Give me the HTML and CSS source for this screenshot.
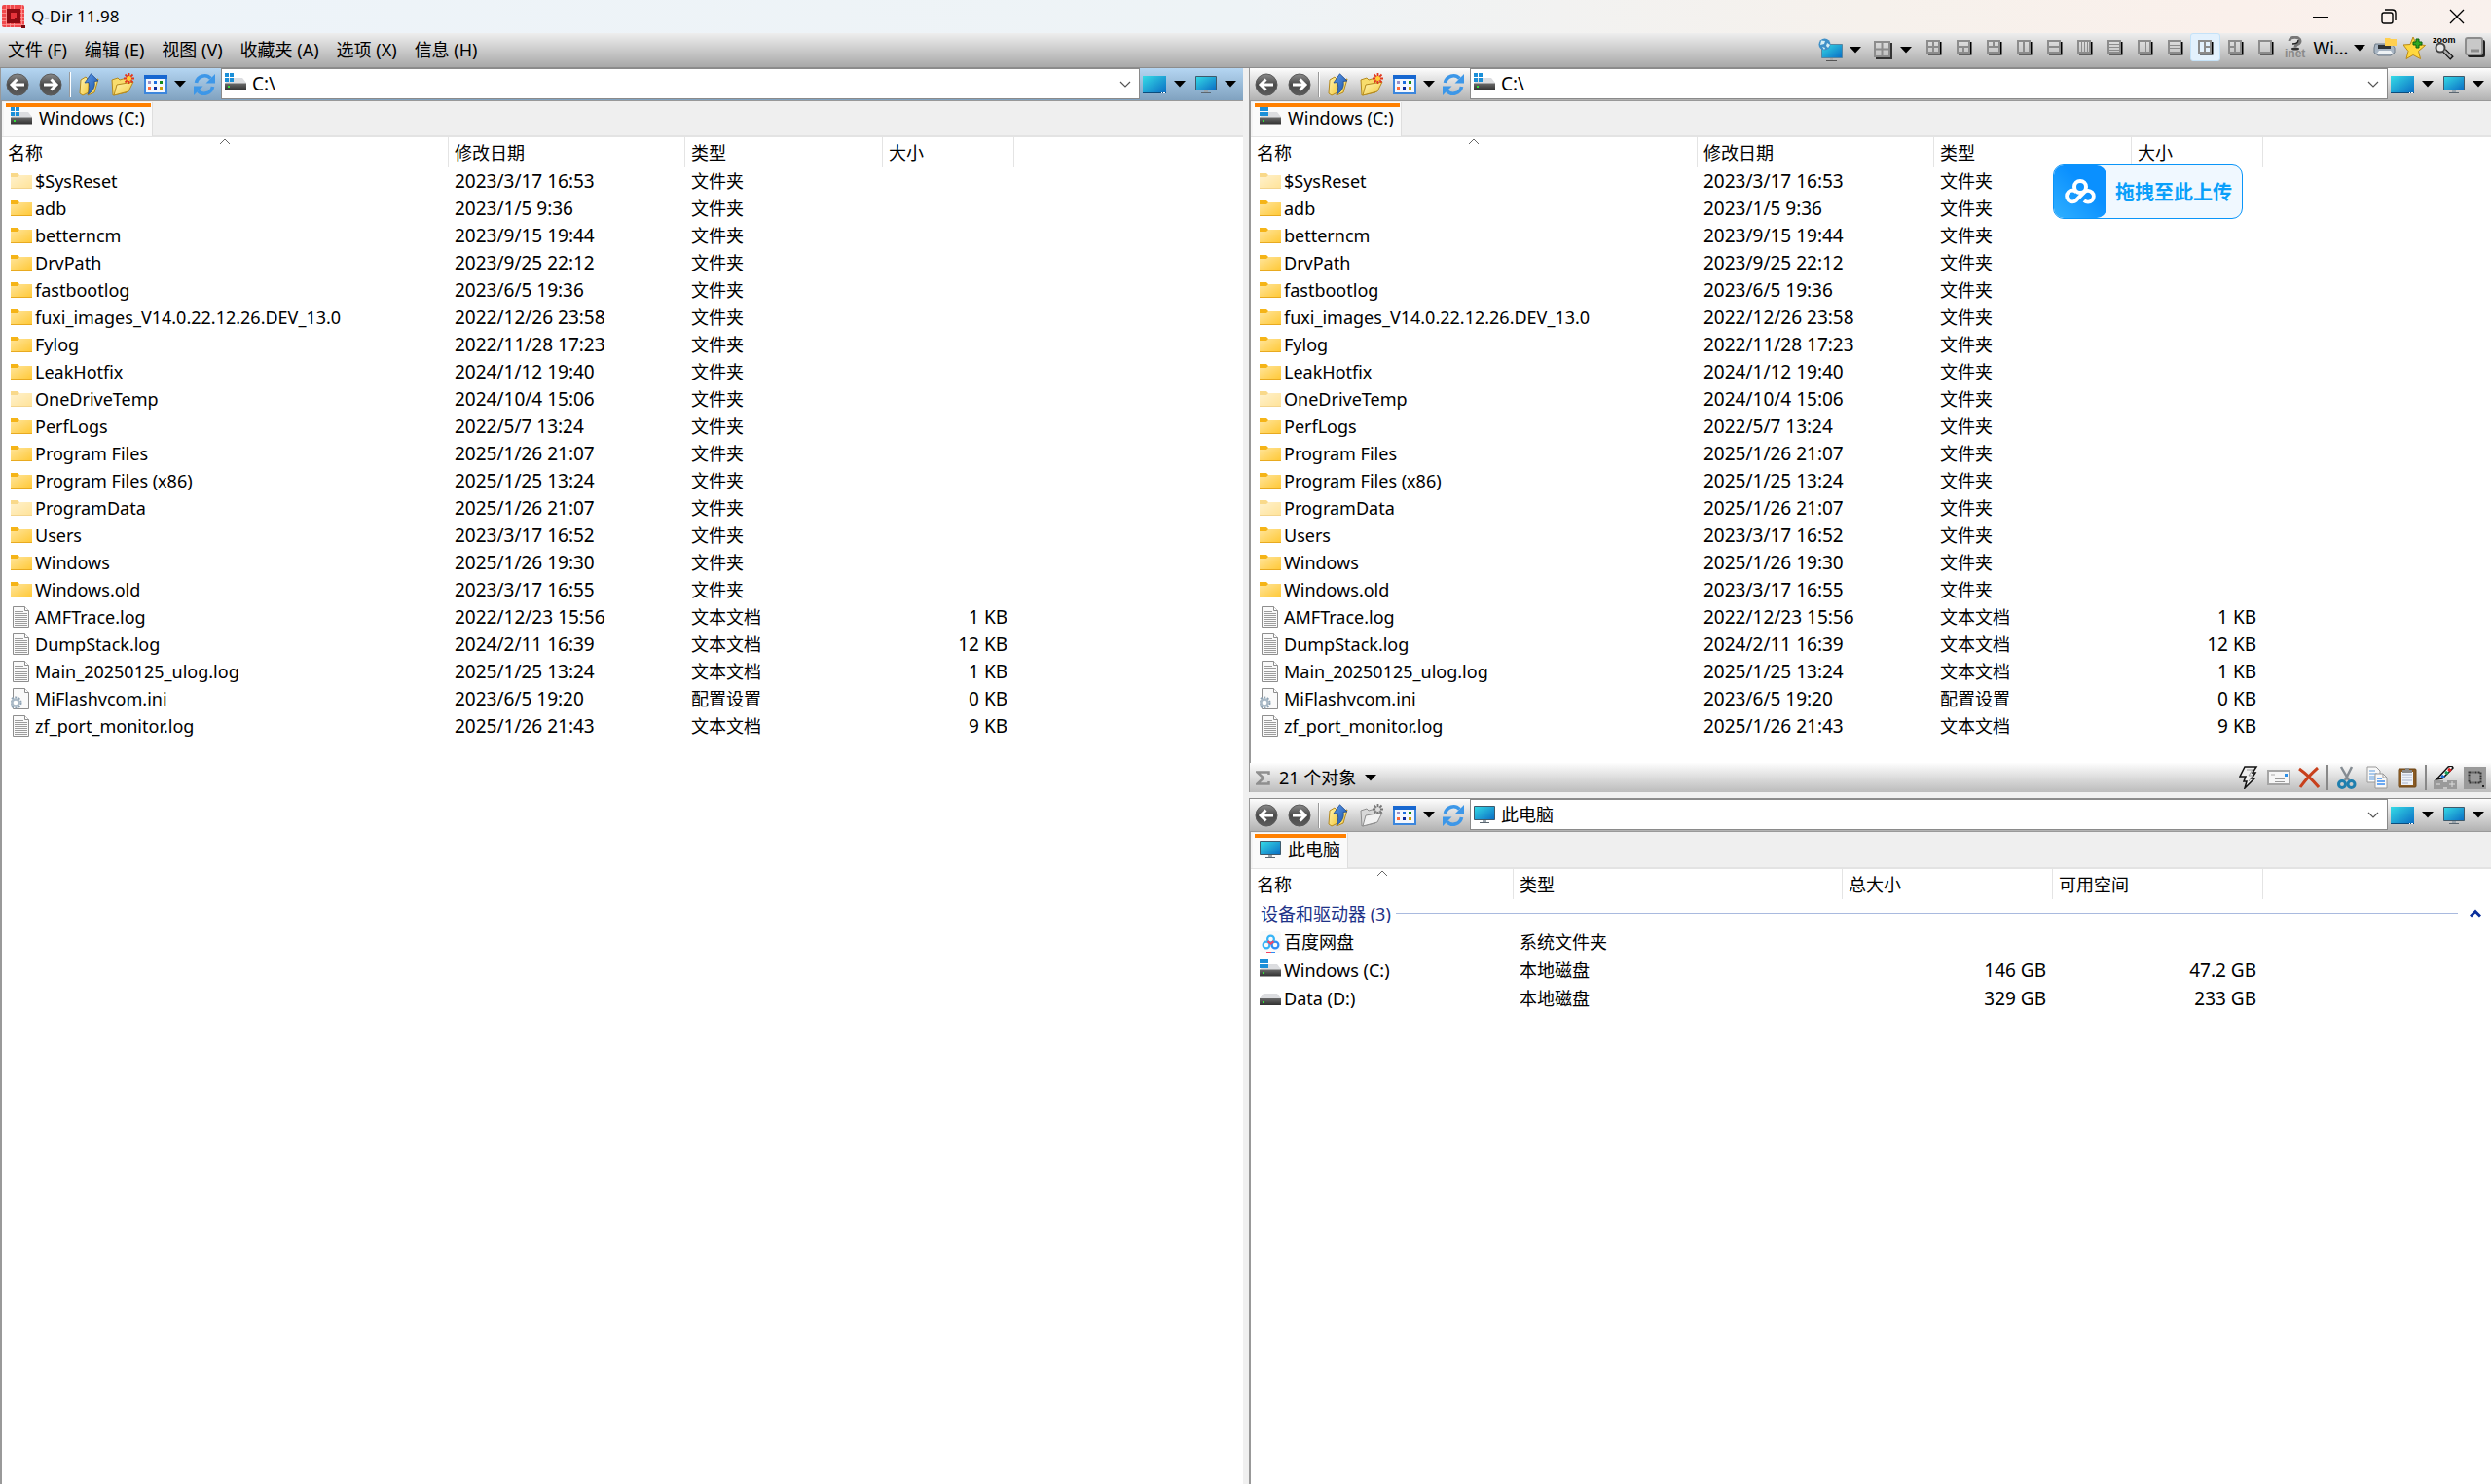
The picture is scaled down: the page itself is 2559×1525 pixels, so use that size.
FILE: index.html
```html
<!DOCTYPE html>
<html lang="zh-CN">
<head>
<meta charset="utf-8">
<title>Q-Dir 11.98</title>
<link rel="stylesheet" href="styles.css">
</head>
<body>
<svg class="sprite" aria-hidden="true">
  <defs>
    <linearGradient id="gScreen" x1="0" y1="0" x2="1" y2="1"><stop offset="0" stop-color="#35dbe6"/><stop offset="1" stop-color="#0a6cc4"/></linearGradient>
    <linearGradient id="gFolder" x1="0" y1="0" x2="1" y2="1"><stop offset="0" stop-color="#ffe59c"/><stop offset="1" stop-color="#ffc938"/></linearGradient>
    <linearGradient id="gBall" x1="0" y1="0" x2="0" y2="1"><stop offset="0" stop-color="#8a8a8a"/><stop offset=".5" stop-color="#4a4a4a"/><stop offset="1" stop-color="#5c5c5c"/></linearGradient>
    <linearGradient id="gYellow" x1="0" y1="0" x2="1" y2="1"><stop offset="0" stop-color="#fff6b8"/><stop offset="1" stop-color="#f3c83a"/></linearGradient>
    <linearGradient id="gArrow" x1="0" y1="0" x2="1" y2="1"><stop offset="0" stop-color="#5b9bef"/><stop offset="1" stop-color="#1a4f9f"/></linearGradient>
    <linearGradient id="gDrive" x1="0" y1="0" x2="0" y2="1"><stop offset="0" stop-color="#6a6a6a"/><stop offset="1" stop-color="#303030"/></linearGradient>
  </defs>
  <symbol id="folder" viewBox="0 0 22 22"><path d="M0 3h7l2 2h13v14H0z" fill="#f5b417"/><path d="M0 7h7l2-2h13v13H0z" fill="url(#gFolder)"/><path d="M0 18h22v1H0z" fill="#e8aa20"/></symbol>
  <symbol id="log" viewBox="0 0 22 22"><path d="M2.5.5h12l4 4v17h-16z" fill="#fafafa" stroke="#8e8e8e"/><path d="M14.500.5v4h4" fill="#fff" stroke="#8e8e8e"/><path d="M4 5.500h9M4 7.500h13M4 9.500h13M4 11.500h13M4 13.500h13M4 15.500h13M4 17.500h13M4 19.500h13" stroke="#9c9c9c"/></symbol>
  <symbol id="ini" viewBox="0 0 22 22"><path d="M2.500.5h12l4 4v17h-16z" fill="#fafafa" stroke="#8e8e8e"/><path d="M14.500.5v4h4" fill="#fff" stroke="#8e8e8e"/><circle cx="5" cy="15" r="5.500" fill="none" stroke="#8fa3b4" stroke-width="2" stroke-dasharray="2 1.500"/><circle cx="5" cy="15" r="3.600" fill="#fff" stroke="#a9b9c6" stroke-width="2.500"/></symbol>
  <symbol id="drive" viewBox="0 0 22 22"><path d="M4 6h14l4 5H0z" fill="#dcdde0"/><path d="M0 11h22v7H0z" fill="url(#gDrive)"/><path d="M3 14h2v2H3z" fill="#33e03a"/></symbol>
  <symbol id="windrive" viewBox="0 0 22 22"><path d="M4 5h14l4 5v1H0z" fill="#dcdde0"/><path d="M0 10.500h22v7H0z" fill="url(#gDrive)"/><path d="M3 13h2v2H3z" fill="#33e03a"/><path d="M0 0h4v4H0zM5 0h4v4H5zM0 5h4v4H0zM5 5h4v4H5z" fill="#1b8fd8"/></symbol>
  <symbol id="pc" viewBox="0 0 22 22"><path d="M.5 2.500h21v14H.5z" fill="url(#gScreen)" stroke="#3f5a6c"/><path d="M9 17h4v2H9z" fill="#9aa5ad"/><path d="M6 19h10v1H6z" fill="#5a6670"/></symbol>
  <symbol id="desk" viewBox="0 0 24 22"><path d="M0 2h24v18H0z" fill="url(#gScreen)"/><path d="M0 19h24v1H0z" fill="#0b4c7c"/><path d="M19 19h1v1h-1zM21 19h2v1h-2z" fill="#fff"/></symbol>
  <symbol id="back" viewBox="0 0 24 24"><circle cx="12" cy="12" r="11" fill="url(#gBall)" stroke="#5a5a5a"/><path d="M11.500 6.500L6 12l5.500 5.500M6 12h13" fill="none" stroke="#fff" stroke-width="3"/></symbol>
  <symbol id="fwd" viewBox="0 0 24 24"><circle cx="12" cy="12" r="11" fill="url(#gBall)" stroke="#5a5a5a"/><path d="M12.500 6.500L18 12l-5.500 5.500M18 12H5" fill="none" stroke="#fff" stroke-width="3"/></symbol>
  <symbol id="up" viewBox="0 0 24 24"><path d="M3 7l5-3 3 3v13l-6 3-3-2z" fill="url(#gYellow)" stroke="#b58a1e"/><path d="M12 9l9-3-4 14-7 3z" fill="url(#gYellow)" stroke="#b58a1e"/><path d="M13.500.8L21 8l-4 .5c1 5-1 10-6.500 13.500C12 17 12 12 11 9.500L7 10z" fill="url(#gArrow)" stroke="#1c4a90" stroke-width=".8"/></symbol>
  <symbol id="newf" viewBox="0 0 24 24"><path d="M1 7l6-2 2 2 7-2 2 3-2 12-14 3z" fill="#f8dd6c" stroke="#b58a1e"/><path d="M6 12l17-3-5 10-15 4z" fill="url(#gYellow)" stroke="#b58a1e"/><path d="M18.500 0v11M13 5.500h11M14.500 1.500l8 8M22.500 1.500l-8 8" stroke="#e2381d" stroke-width="1.800"/><circle cx="18.500" cy="5.500" r="2.500" fill="#ffce3a"/></symbol>
  <symbol id="newg" viewBox="0 0 24 24"><path d="M1 7l6-2 2 2 7-2 2 3-2 12-14 3z" fill="#d8d8d8" stroke="#8e8e8e"/><path d="M6 12l17-3-5 10-15 4z" fill="#f1f1f1" stroke="#8e8e8e"/><path d="M18.500 0v11M13 5.500h11M14.500 1.500l8 8M22.500 1.500l-8 8" stroke="#777" stroke-width="1.800"/><circle cx="18.500" cy="5.500" r="2.500" fill="#ddd"/></symbol>
  <symbol id="view" viewBox="0 0 24 24"><path d="M1 3h22v18H1z" fill="#f4f8ff" stroke="#3b86dd" stroke-width="2"/><path d="M0 2h24v4H0z" fill="#1767d0"/><path d="M4 8h3v3H4z" fill="#9a90c8"/><path d="M10 8h3v3h-3z" fill="#1d6fe0"/><path d="M16 8h3v3h-3z" fill="#138a1c"/><path d="M4 14h3v3H4z" fill="#ff6a3c"/><path d="M10 14h3v3h-3z" fill="#0c2b9c"/><path d="M16 14h3v3h-3z" fill="#caa012"/></symbol>
  <symbol id="refresh" viewBox="0 0 24 24"><path d="M3.500 10A8.800 8.800 0 0 1 18.500 5.500M20.500 14A8.800 8.800 0 0 1 5.500 18.500" fill="none" stroke="#3d97e8" stroke-width="3.600"/><path d="M23 1v9.500h-9.500zM1 23v-9.500h9.500z" fill="#3d97e8"/></symbol>
  <symbol id="caret" viewBox="0 0 12 7"><path d="M0 0h12L6 6.500z"/></symbol>
  <symbol id="chev" viewBox="0 0 12 7"><path d="M1 1l5 5 5-5" fill="none" stroke="#555" stroke-width="1.200"/></symbol>
  <symbol id="sort" viewBox="0 0 12 7"><path d="M1 6l5-5 5 5" fill="none" stroke="#666"/></symbol>
  <symbol id="frame" viewBox="0 0 16 16"><path d="M14 2h1.500v13.500H2V14h12z" fill="#000"/><path d="M1 1h12v12H1z" fill="none" stroke="#8c8c8c" stroke-width="2"/></symbol>
  <symbol id="baidu" viewBox="0 0 22 22"><rect width="22" height="22" rx="3" fill="#fafafa"/><circle cx="7" cy="14" r="3.400" fill="none" stroke="#37b4f6" stroke-width="2.200"/><circle cx="16" cy="14" r="3.400" fill="none" stroke="#2e8df5" stroke-width="2.200"/><circle cx="11.500" cy="8" r="3.400" fill="none" stroke="#37b4f6" stroke-width="2.200"/><path d="M8.500 10.200l3 2.300 3-2.300" fill="none" stroke="#f0486a" stroke-width="2.200"/><path d="M7 21h5v1H7z" fill="#f04060"/><path d="M12 21h4v1h-4z" fill="#2e8df5"/></symbol>
</svg>

<header class="titlebar">
  <svg class="appicon" viewBox="0 0 24 24"><rect width="23" height="23" rx="2" fill="#f0484c"/><path d="M0 4.500h23M0 8.500h23M0 12.500h23M0 16.500h23M0 20.500h23M4.500 0v23M8.500 0v23M12.500 0v23M16.500 0v23M20.500 0v23" stroke="#ff9a98" stroke-width=".8"/><path d="M5 4h14v15H5z" fill="#8d0b12"/><path d="M9 8h6v5h-2v2H9z" fill="#e5343b"/><path d="M20 21h4v3h-4z" fill="#7a0a10"/></svg>
  <h1 class="title">Q-Dir 11.98</h1>
  <button class="winbtn" aria-label="最小化"><svg width="16" height="16" viewBox="0 0 16 16"><path d="M0 8.500h16" stroke="#000"/></svg></button>
  <button class="winbtn" aria-label="还原"><svg width="16" height="16" viewBox="0 0 16 16" fill="none" stroke="#000" stroke-width="1.400"><rect x="1" y="4" width="11" height="11" rx="2"/><path d="M4 1h7.500Q15 1 15 4.500V12"/></svg></button>
  <button class="winbtn" aria-label="关闭"><svg width="16" height="16" viewBox="0 0 16 16"><path d="M1 1l14 14M15 1L1 15" stroke="#000" stroke-width="1.300"/></svg></button>
</header>

<nav class="menubar">
  <button class="menu">文件 (F)</button>
  <button class="menu">编辑 (E)</button>
  <button class="menu">视图 (V)</button>
  <button class="menu">收藏夹 (A)</button>
  <button class="menu">选项 (X)</button>
  <button class="menu">信息 (H)</button>
  <div class="tools">
    <button class="drop" aria-label="网络"><svg width="25" height="25" viewBox="0 0 25 25"><path d="M3.500 6.500h21v14h-21z" fill="url(#gScreen)" stroke="#5a86a0"/><path d="M12 21h3v2h-3z" fill="#aaa"/><path d="M8 23.500h11" stroke="#555"/><circle cx="6.500" cy="6.500" r="6" fill="#3f90c8"/><path d="M3 2.500l4 .5-1 3-4 1zM9 5l3 2-2 3-2-2zM4 9l3 1-1 2z" fill="#d6eef4"/></svg><svg class="caret"><use href="#caret"/></svg></button>
    <button class="drop" aria-label="布局"><svg width="20" height="20" viewBox="0 0 20 20"><path d="M17 2h2v17H2v-2h15z" fill="#333"/><path d="M1 1h15v15H1z" fill="none" stroke="#8c8c8c" stroke-width="2"/><path d="M8.500 2v14M2 8.500h14" stroke="#8c8c8c" stroke-width="2"/></svg><svg class="caret"><use href="#caret"/></svg></button>
    <button class="lay" aria-label="四窗格"><svg width="16" height="16"><use href="#frame"/><path d="M7 1v12M1 7h12"/></svg></button>
    <button class="lay" aria-label="上一下二"><svg width="16" height="16"><use href="#frame"/><path d="M7 7v6M1 7h12"/></svg></button>
    <button class="lay" aria-label="上二下一"><svg width="16" height="16"><use href="#frame"/><path d="M7 1v6M1 7h12"/></svg></button>
    <button class="lay" aria-label="两列"><svg width="16" height="16"><use href="#frame"/><path d="M7 1v12"/></svg></button>
    <button class="lay" aria-label="两行"><svg width="16" height="16"><use href="#frame"/><path d="M1 7h12"/></svg></button>
    <button class="lay thin" aria-label="四列"><svg width="16" height="16"><use href="#frame"/><path d="M4.500 1v12M7.500 1v12M10.500 1v12"/></svg></button>
    <button class="lay thin" aria-label="四行"><svg width="16" height="16"><use href="#frame"/><path d="M1 4.500h12M1 7.500h12M1 10.500h12"/></svg></button>
    <button class="lay thin" aria-label="三列"><svg width="16" height="16"><use href="#frame"/><path d="M5.500 1v12M8.500 1v12"/></svg></button>
    <button class="lay thin" aria-label="三行"><svg width="16" height="16"><use href="#frame"/><path d="M1 5.500h12M1 8.500h12"/></svg></button>
    <button class="lay active" aria-label="左一右二" aria-pressed="true"><svg width="16" height="16"><use href="#frame"/><path d="M7 1v12M7 7h6"/></svg></button>
    <button class="lay" aria-label="左二右一"><svg width="16" height="16"><use href="#frame"/><path d="M7 1v12M1 7h6"/></svg></button>
    <button class="lay" aria-label="单窗格"><svg width="16" height="16"><use href="#frame"/></svg></button>
    <button class="inet" aria-label="帮助"><svg width="24" height="24" viewBox="0 0 24 24"><path d="M6 5c0-5 11-5 11 0 0 4-5 3-5 6" fill="none" stroke="#777" stroke-width="3"/><path d="M9 8c5 0 6-2 6-4" fill="none" stroke="#222" stroke-width="1.500"/><ellipse cx="12" cy="13" rx="4" ry="1.500" fill="#333"/><text x="1" y="22" class="inet-text">inet</text></svg></button>
    <button class="wi">Wi...<svg class="caret"><use href="#caret"/></svg></button>
    <button class="lay" aria-label="打印"><svg width="24" height="24" viewBox="0 0 24 24"><path d="M2 8h17l3 4v5l-4 3H5l-4-3v-5z" fill="#a9b6c4" stroke="#6e7c8a"/><path d="M5 9h13v4H5z" fill="#2e3338"/><path d="M6 15h12l2 3H4z" fill="#eef2f5"/><path d="M12 2h5l1 1h6v7H12z" fill="#ffcf4f"/></svg></button>
    <button class="lay" aria-label="收藏"><svg width="24" height="24" viewBox="0 0 24 24"><path d="M10 1l3.500 7.500 9 1-7 6 2 8-7.500-4-7 4 2-8L0 9l7-.5z" fill="#ffd83e" stroke="#b98a1a"/><path d="M13 3h3v3h3v3h-3v3h-3V9h-3V6h3z" fill="#2fa821" stroke="#0d6010"/></svg></button>
    <button class="lay" aria-label="缩放"><svg width="25" height="26" viewBox="0 0 25 26"><text x="0" y="8" class="zoom-text">zoom</text><circle cx="8" cy="13" r="4.500" fill="#e6e6e6" stroke="#444" stroke-width="2"/><path d="M12 16l8 8" stroke="#111" stroke-width="5"/><path d="M12 16l7 7" stroke="#aaa" stroke-width="2.500"/></svg></button>
    <button class="lay" aria-label="托盘"><svg width="21" height="21" viewBox="0 0 21 21"><rect x="3" y="3" width="18" height="18" rx="2" fill="#222"/><rect x="1" y="1" width="17" height="17" rx="2" fill="#c8c8c8" stroke="#8c8c8c" stroke-width="2"/><path d="M6 14h9" stroke="#8c8c8c" stroke-width="3"/></svg></button>
  </div>
</nav>

<main class="workspace">
  <section class="pane focused">
    <div class="toolbar">
      <button class="tb" aria-label="后退"><svg><use href="#back"/></svg></button>
      <button class="tb" aria-label="前进"><svg><use href="#fwd"/></svg></button>
      <i class="sep"></i>
      <button class="tb" aria-label="上级"><svg><use href="#up"/></svg></button>
      <button class="tb" aria-label="新建文件夹"><svg><use href="#newf"/></svg></button>
      <button class="tb" aria-label="查看"><svg><use href="#view"/></svg></button>
      <button class="tc" aria-label="查看方式"><svg class="caret"><use href="#caret"/></svg></button>
      <button class="tb" aria-label="刷新"><svg><use href="#refresh"/></svg></button>
      <div class="combo"><svg class="ico"><use href="#windrive"/></svg><input aria-label="地址" value="C:\"><button class="open" aria-label="展开"><svg class="caret"><use href="#chev"/></svg></button></div>
      <button class="td" aria-label="桌面"><svg width="24" height="22"><use href="#desk"/></svg><svg class="caret"><use href="#caret"/></svg></button>
      <button class="td" aria-label="此电脑"><svg width="22" height="22"><use href="#pc"/></svg><svg class="caret"><use href="#caret"/></svg></button>
    </div>
    <div class="view">
      <div class="tabs"><button class="tab"><svg class="ico"><use href="#windrive"/></svg>Windows (C:)</button></div>
      <table class="files">
        <colgroup><col class="c-name"><col class="c-date"><col class="c-type"><col class="c-size"><col></colgroup>
        <thead><tr><th>名称<svg class="sort"><use href="#sort"/></svg></th><th>修改日期</th><th>类型</th><th>大小</th><td></td></tr></thead>
        <tbody>
          <tr class="pale"><td><svg><use href="#folder"/></svg>$SysReset</td><td>2023/3/17 16:53</td><td>文件夹</td><td></td></tr>
          <tr><td><svg><use href="#folder"/></svg>adb</td><td>2023/1/5 9:36</td><td>文件夹</td><td></td></tr>
          <tr><td><svg><use href="#folder"/></svg>betterncm</td><td>2023/9/15 19:44</td><td>文件夹</td><td></td></tr>
          <tr><td><svg><use href="#folder"/></svg>DrvPath</td><td>2023/9/25 22:12</td><td>文件夹</td><td></td></tr>
          <tr><td><svg><use href="#folder"/></svg>fastbootlog</td><td>2023/6/5 19:36</td><td>文件夹</td><td></td></tr>
          <tr><td><svg><use href="#folder"/></svg>fuxi_images_V14.0.22.12.26.DEV_13.0</td><td>2022/12/26 23:58</td><td>文件夹</td><td></td></tr>
          <tr><td><svg><use href="#folder"/></svg>Fylog</td><td>2022/11/28 17:23</td><td>文件夹</td><td></td></tr>
          <tr><td><svg><use href="#folder"/></svg>LeakHotfix</td><td>2024/1/12 19:40</td><td>文件夹</td><td></td></tr>
          <tr class="pale"><td><svg><use href="#folder"/></svg>OneDriveTemp</td><td>2024/10/4 15:06</td><td>文件夹</td><td></td></tr>
          <tr><td><svg><use href="#folder"/></svg>PerfLogs</td><td>2022/5/7 13:24</td><td>文件夹</td><td></td></tr>
          <tr><td><svg><use href="#folder"/></svg>Program Files</td><td>2025/1/26 21:07</td><td>文件夹</td><td></td></tr>
          <tr><td><svg><use href="#folder"/></svg>Program Files (x86)</td><td>2025/1/25 13:24</td><td>文件夹</td><td></td></tr>
          <tr class="pale"><td><svg><use href="#folder"/></svg>ProgramData</td><td>2025/1/26 21:07</td><td>文件夹</td><td></td></tr>
          <tr><td><svg><use href="#folder"/></svg>Users</td><td>2023/3/17 16:52</td><td>文件夹</td><td></td></tr>
          <tr><td><svg><use href="#folder"/></svg>Windows</td><td>2025/1/26 19:30</td><td>文件夹</td><td></td></tr>
          <tr><td><svg><use href="#folder"/></svg>Windows.old</td><td>2023/3/17 16:55</td><td>文件夹</td><td></td></tr>
          <tr><td><svg><use href="#log"/></svg>AMFTrace.log</td><td>2022/12/23 15:56</td><td>文本文档</td><td>1 KB</td></tr>
          <tr><td><svg><use href="#log"/></svg>DumpStack.log</td><td>2024/2/11 16:39</td><td>文本文档</td><td>12 KB</td></tr>
          <tr><td><svg><use href="#log"/></svg>Main_20250125_ulog.log</td><td>2025/1/25 13:24</td><td>文本文档</td><td>1 KB</td></tr>
          <tr><td><svg><use href="#ini"/></svg>MiFlashvcom.ini</td><td>2023/6/5 19:20</td><td>配置设置</td><td>0 KB</td></tr>
          <tr><td><svg><use href="#log"/></svg>zf_port_monitor.log</td><td>2025/1/26 21:43</td><td>文本文档</td><td>9 KB</td></tr>
        </tbody>
      </table>
    </div>
  </section>

  <div class="stack">
    <section class="pane">
      <div class="toolbar">
        <button class="tb" aria-label="后退"><svg><use href="#back"/></svg></button>
        <button class="tb" aria-label="前进"><svg><use href="#fwd"/></svg></button>
        <i class="sep"></i>
        <button class="tb" aria-label="上级"><svg><use href="#up"/></svg></button>
        <button class="tb" aria-label="新建文件夹"><svg><use href="#newf"/></svg></button>
        <button class="tb" aria-label="查看"><svg><use href="#view"/></svg></button>
        <button class="tc" aria-label="查看方式"><svg class="caret"><use href="#caret"/></svg></button>
        <button class="tb" aria-label="刷新"><svg><use href="#refresh"/></svg></button>
        <div class="combo"><svg class="ico"><use href="#windrive"/></svg><input aria-label="地址" value="C:\"><button class="open" aria-label="展开"><svg class="caret"><use href="#chev"/></svg></button></div>
        <button class="td" aria-label="桌面"><svg width="24" height="22"><use href="#desk"/></svg><svg class="caret"><use href="#caret"/></svg></button>
        <button class="td" aria-label="此电脑"><svg width="22" height="22"><use href="#pc"/></svg><svg class="caret"><use href="#caret"/></svg></button>
      </div>
      <div class="view">
        <div class="tabs"><button class="tab"><svg class="ico"><use href="#windrive"/></svg>Windows (C:)</button></div>
        <table class="files">
          <colgroup><col class="c-name"><col class="c-date"><col class="c-type"><col class="c-size"><col></colgroup>
          <thead><tr><th>名称<svg class="sort"><use href="#sort"/></svg></th><th>修改日期</th><th>类型</th><th>大小</th><td></td></tr></thead>
          <tbody>
            <tr class="pale"><td><svg><use href="#folder"/></svg>$SysReset</td><td>2023/3/17 16:53</td><td>文件夹</td><td></td></tr>
            <tr><td><svg><use href="#folder"/></svg>adb</td><td>2023/1/5 9:36</td><td>文件夹</td><td></td></tr>
            <tr><td><svg><use href="#folder"/></svg>betterncm</td><td>2023/9/15 19:44</td><td>文件夹</td><td></td></tr>
            <tr><td><svg><use href="#folder"/></svg>DrvPath</td><td>2023/9/25 22:12</td><td>文件夹</td><td></td></tr>
            <tr><td><svg><use href="#folder"/></svg>fastbootlog</td><td>2023/6/5 19:36</td><td>文件夹</td><td></td></tr>
            <tr><td><svg><use href="#folder"/></svg>fuxi_images_V14.0.22.12.26.DEV_13.0</td><td>2022/12/26 23:58</td><td>文件夹</td><td></td></tr>
            <tr><td><svg><use href="#folder"/></svg>Fylog</td><td>2022/11/28 17:23</td><td>文件夹</td><td></td></tr>
            <tr><td><svg><use href="#folder"/></svg>LeakHotfix</td><td>2024/1/12 19:40</td><td>文件夹</td><td></td></tr>
            <tr class="pale"><td><svg><use href="#folder"/></svg>OneDriveTemp</td><td>2024/10/4 15:06</td><td>文件夹</td><td></td></tr>
            <tr><td><svg><use href="#folder"/></svg>PerfLogs</td><td>2022/5/7 13:24</td><td>文件夹</td><td></td></tr>
            <tr><td><svg><use href="#folder"/></svg>Program Files</td><td>2025/1/26 21:07</td><td>文件夹</td><td></td></tr>
            <tr><td><svg><use href="#folder"/></svg>Program Files (x86)</td><td>2025/1/25 13:24</td><td>文件夹</td><td></td></tr>
            <tr class="pale"><td><svg><use href="#folder"/></svg>ProgramData</td><td>2025/1/26 21:07</td><td>文件夹</td><td></td></tr>
            <tr><td><svg><use href="#folder"/></svg>Users</td><td>2023/3/17 16:52</td><td>文件夹</td><td></td></tr>
            <tr><td><svg><use href="#folder"/></svg>Windows</td><td>2025/1/26 19:30</td><td>文件夹</td><td></td></tr>
            <tr><td><svg><use href="#folder"/></svg>Windows.old</td><td>2023/3/17 16:55</td><td>文件夹</td><td></td></tr>
            <tr><td><svg><use href="#log"/></svg>AMFTrace.log</td><td>2022/12/23 15:56</td><td>文本文档</td><td>1 KB</td></tr>
            <tr><td><svg><use href="#log"/></svg>DumpStack.log</td><td>2024/2/11 16:39</td><td>文本文档</td><td>12 KB</td></tr>
            <tr><td><svg><use href="#log"/></svg>Main_20250125_ulog.log</td><td>2025/1/25 13:24</td><td>文本文档</td><td>1 KB</td></tr>
            <tr><td><svg><use href="#ini"/></svg>MiFlashvcom.ini</td><td>2023/6/5 19:20</td><td>配置设置</td><td>0 KB</td></tr>
            <tr><td><svg><use href="#log"/></svg>zf_port_monitor.log</td><td>2025/1/26 21:43</td><td>文本文档</td><td>9 KB</td></tr>
          </tbody>
        </table>
      </div>
      <div class="status">
        <button class="count"><svg width="15" height="15" viewBox="0 0 15 15"><path d="M13.500 4V1.500h-12L8 7.500l-6.500 6h12V11" fill="none" stroke="#8f8f8f" stroke-width="2.500"/></svg>21 个对象<svg class="caret"><use href="#caret"/></svg></button>
        <button class="sb" aria-label="快速链接"><svg width="20" height="24" viewBox="0 0 20 24"><path d="M6 1h12l-4 6h3l-4 6h3L6 23l2-7H5l2-5H1z" fill="#eee" stroke="#111" stroke-width="1.500"/><path d="M8 4h6l-4 6h4l-4 6" fill="none" stroke="#999"/></svg></button>
        <button class="sb" aria-label="重命名"><svg width="24" height="17" viewBox="0 0 24 17"><rect x="1" y="1" width="22" height="14" fill="#f6f6f6" stroke="#a5a5a5" stroke-width="2"/><path d="M4 5h4" stroke="#aaa"/><path d="M18 4h3v3h-3z" fill="#2b8fe8"/><path d="M8 9.500h10M8 12.500h10" stroke="#999"/></svg></button>
        <button class="sb" aria-label="删除"><svg width="22" height="22" viewBox="0 0 22 22"><path d="M1 2C8 7 15 14 21 21M20 1C13 7 7 14 2 21" fill="none" stroke="#c8401c" stroke-width="3"/></svg></button>
        <i class="bar"></i>
        <button class="sb" aria-label="剪切"><svg width="20" height="24" viewBox="0 0 20 24"><path d="M4 1l8 14M15 1L8 15" stroke="#858c92" stroke-width="2.500"/><circle cx="5" cy="19" r="3.500" fill="none" stroke="#1f7fae" stroke-width="3"/><circle cx="14.500" cy="19" r="3.500" fill="none" stroke="#1f7fae" stroke-width="3"/></svg></button>
        <button class="sb" aria-label="复制"><svg width="22" height="24" viewBox="0 0 22 24"><path d="M1 1h9l4 4v12H1z" fill="#f8f8f8" stroke="#999"/><path d="M3 5h6M3 8h8M3 11h8M3 14h6" stroke="#5a9be0"/><path d="M9 8h8l4 4v11H9z" fill="#f8f8f8" stroke="#999"/><path d="M17 8v4h4" fill="none" stroke="#999"/><path d="M11 13h5M11 16h8M11 19h8" stroke="#3b8df0" stroke-width="1.500"/></svg></button>
        <button class="sb" aria-label="粘贴"><svg width="20" height="22" viewBox="0 0 20 22"><rect x="1" y="2" width="18" height="19" rx="1" fill="#8a5a22" stroke="#6b4417"/><path d="M4 5h12v14H4z" fill="#eef2f8"/><path d="M5 8h10M5 11h10M5 14h10M5 17h6" stroke="#a9b4cc"/><path d="M5 3h3V1h4v2h3v3H5z" fill="#8a8a8a"/></svg></button>
        <i class="bar"></i>
        <button class="sb" aria-label="颜色"><svg width="24" height="24" viewBox="0 0 24 24"><path d="M0 15h10v2h4v-2h10v9H14v-2h-4v2H0z" fill="#9a9a9a"/><path d="M2 19h5M16 19h6M19 16v6" stroke="#ddd"/><path d="M3 14L15 1q4-2 5 1L9 13z" fill="#fff" stroke="#111" stroke-width="1.500"/><path d="M8 10l3 2" stroke="#1d6fd0" stroke-width="3"/><path d="M12 6l3 2" stroke="#16a05a" stroke-width="3"/><path d="M15 3l3 2" stroke="#d22" stroke-width="3"/></svg></button>
        <button class="sb" aria-label="网格"><svg width="23" height="23" viewBox="0 0 23 23"><path d="M0 0h23v23H0z" fill="#9a9a9a"/><path d="M5.500 5.500h12v11h-12z" fill="none" stroke="#333" stroke-width="2" stroke-dasharray="2 1"/><path d="M19 19h2v2h-2z" fill="#222"/></svg></button>
      </div>
      <div class="upload"><span class="upload-logo"><svg width="32" height="26" viewBox="0 0 32 26" fill="none" stroke="#fff" stroke-width="4"><circle cx="16" cy="8" r="6"/><path d="M16 17.500l4-4a5.800 5.800 0 1 1 0 8.500M20 13.500l-8 8.200a5.800 5.800 0 1 1 0-8.400"/></svg></span><span class="upload-text">拖拽至此上传</span></div>
    </section>

    <section class="pane lower">
      <div class="toolbar">
        <button class="tb" aria-label="后退"><svg><use href="#back"/></svg></button>
        <button class="tb" aria-label="前进"><svg><use href="#fwd"/></svg></button>
        <i class="sep"></i>
        <button class="tb" aria-label="上级"><svg><use href="#up"/></svg></button>
        <button class="tb" aria-label="新建文件夹"><svg><use href="#newg"/></svg></button>
        <button class="tb" aria-label="查看"><svg><use href="#view"/></svg></button>
        <button class="tc" aria-label="查看方式"><svg class="caret"><use href="#caret"/></svg></button>
        <button class="tb" aria-label="刷新"><svg><use href="#refresh"/></svg></button>
        <div class="combo cjk"><svg class="ico"><use href="#pc"/></svg><input aria-label="地址" value="此电脑"><button class="open" aria-label="展开"><svg class="caret"><use href="#chev"/></svg></button></div>
        <button class="td" aria-label="桌面"><svg width="24" height="22"><use href="#desk"/></svg><svg class="caret"><use href="#caret"/></svg></button>
        <button class="td" aria-label="此电脑"><svg width="22" height="22"><use href="#pc"/></svg><svg class="caret"><use href="#caret"/></svg></button>
      </div>
      <div class="view">
        <div class="tabs"><button class="tab"><svg class="ico"><use href="#pc"/></svg>此电脑</button></div>
        <table class="files drives">
          <colgroup><col class="d-name"><col class="d-type"><col class="d-size"><col class="d-size"><col></colgroup>
          <thead><tr><th>名称<svg class="sort"><use href="#sort"/></svg></th><th>类型</th><th>总大小</th><th>可用空间</th><td></td></tr></thead>
          <tbody>
            <tr class="group"><td colspan="5"><div class="group-head">设备和驱动器 (3)<i class="rule"></i><svg width="12" height="9" viewBox="0 0 12 9"><path d="M1 7.500l5-5 5 5" fill="none" stroke="#0a2f9c" stroke-width="3"/></svg></div></td></tr>
            <tr><td><svg><use href="#baidu"/></svg>百度网盘</td><td>系统文件夹</td><td></td><td></td></tr>
            <tr><td><svg><use href="#windrive"/></svg>Windows (C:)</td><td>本地磁盘</td><td>146 GB</td><td>47.2 GB</td></tr>
            <tr><td><svg><use href="#drive"/></svg>Data (D:)</td><td>本地磁盘</td><td>329 GB</td><td>233 GB</td></tr>
          </tbody>
        </table>
      </div>
    </section>
  </div>
</main>
</body>
</html>
```
FILE: styles.css
```css
* { box-sizing: border-box; }

body {
  margin: 0;
  min-height: 100vh;
  display: flex;
  flex-direction: column;
  background: #f0f0f0;
  color: #000;
  font-family: "Noto Sans", "Noto Sans CJK SC", sans-serif;
  font-size: 18px;
  line-height: 24px;
}

button, input {
  font: inherit;
  color: inherit;
  border: 0;
  padding: 0;
  margin: 0;
  background: none;
}

button {
  display: flex;
  align-items: center;
  justify-content: center;
  flex: none;
  white-space: nowrap;
}

svg { display: block; flex: none; }
.sprite { position: absolute; width: 0; height: 0; }
.caret { width: 12px; height: 7px; }
.ico { width: 22px; height: 22px; }

/* title bar */
.titlebar {
  height: 34px;
  display: flex;
  align-items: center;
  padding-left: 2px;
  background: linear-gradient(90deg, #edf3f9 0%, #eef3f6 50%, #f6f1ec 75%, #faf0eb 90%, #f9f1ed 100%);
}
.appicon { width: 24px; height: 24px; }
.title {
  flex: 1;
  margin: 0 0 0 6px;
  font-size: 17px;
  font-weight: 400;
}
.winbtn { width: 70px; height: 34px; }

/* menu bar */
.menubar {
  height: 36px;
  display: flex;
  background: linear-gradient(#eeeeee, #a8a8a8);
  border-bottom: 1px solid #8c8c8c;
}
.menu { padding: 0 10px 2px 8px; }
.tools { display: flex; margin-left: auto; padding-right: 1px; }
.drop { width: 54px; gap: 7px; }
.lay { width: 31px; height: 29px; border-radius: 3px; }
.lay > svg > use + path { stroke: #8c8c8c; stroke-width: 2; fill: none; }
.lay.thin > svg > use + path { stroke-width: 1; }
.lay.active { background: #e3f1fd; border: 1px solid #c5e2f8; }
.inet { width: 30px; height: 30px; }
.inet-text, .zoom-text { font-family: "Liberation Sans", sans-serif; font-weight: 700; }
.inet-text { font-size: 12px; fill: #8a8a8a; }
.zoom-text { font-size: 9px; }
.wi { width: 61px; height: 30px; gap: 6px; }

/* panes */
.workspace {
  flex: 1;
  display: grid;
  grid-template-columns: minmax(0, 1277fr) minmax(0, 1276fr);
  column-gap: 6px;
}
.stack { display: flex; flex-direction: column; gap: 6px; }
.pane {
  position: relative;
  display: flex;
  flex-direction: column;
  border-left: 1px solid #999;
}
.lower { flex: 1; border-top: 1px solid #8c8c8c; }

.toolbar {
  height: 34px;
  display: flex;
  align-items: center;
  background: linear-gradient(#fdfdfd, #b2b2b2);
  border-bottom: 1px solid #999;
}
.focused .toolbar { background: linear-gradient(#b5d6f2, #80a2c0); }
.tb { width: 34px; height: 32px; }
.tb svg { width: 24px; height: 24px; }
.tc { width: 16px; }
.sep { width: 2px; height: 26px; margin: 0 2px; background: linear-gradient(90deg, #999 50%, #fff 50%); }
.combo {
  flex: 1;
  align-self: flex-start;
  height: 32px;
  display: flex;
  align-items: center;
  padding-left: 3px;
  background: #fff;
  border: 1px solid #8a8a8a;
}
.combo input { flex: 1; min-width: 0; margin-left: 6px; outline: 0; font-size: 19px; }
.combo.cjk input { font-size: 18px; }
.open { width: 28px; height: 30px; }
.td { width: 53px; height: 32px; gap: 8px; padding-right: 3px; }

.view {
  flex: 1;
  padding-bottom: 24px;
  background: #fff;
  border-left: 1px solid #999;
}
.tabs {
  height: 37px;
  display: flex;
  background: #efefef;
  border-bottom: 2px solid #e3e3e3;
}
.lower .tabs { height: 38px; }
.tab {
  margin: 1px 0 -1px;
  padding: 0 7px 3px 7px;
  gap: 7px;
  background: linear-gradient(#ff8000, #ff8000) 2px 1px / calc(100% - 3px) 4px no-repeat #fafafa;
  border-left: 2px solid #f4f4f4;
  border-right: 1px solid #dedede;
}

/* file lists */
.files {
  width: 100%;
  table-layout: fixed;
  border-collapse: separate;
  border-spacing: 0;
  white-space: nowrap;
}
.c-name { width: 459px; }
.c-date { width: 243px; }
.c-type { width: 203px; }
.c-size { width: 135px; }
.d-name { width: 270px; }
.d-type { width: 338px; }
.d-size { width: 216px; }
.files th {
  position: relative;
  height: 31px;
  padding: 0 6px;
  text-align: left;
  font-weight: 400;
  border-right: 1px solid #e4e4e4;
}
.files thead td { padding: 0; }
.sort { position: absolute; top: 1px; left: calc(50% - 6px); width: 12px; height: 7px; }
.files tbody td { height: 28px; padding: 0 7px 0 6px; line-height: 24px; }
.files tbody td:first-child { padding: 0 0 0 9px; }
.files tbody td:nth-child(2), .files tbody td:nth-child(4) { font-size: 19px; }
.files td:nth-child(4) { text-align: right; }
.files td > svg { display: inline-block; width: 22px; height: 22px; margin-right: 3px; vertical-align: -4px; }
.pale svg { opacity: .5; }

.files.drives tbody td { height: 29px; }
.files.drives tbody td:nth-child(2) { font-size: 18px; }
.files.drives tbody td:nth-child(3) { font-size: 19px; text-align: right; }
.files.drives .group td { padding: 0 10px; color: #1e3287; }
.group-head { display: flex; align-items: center; }
.rule { flex: 1; height: 1px; margin: 0 12px 0 5px; background: #a9badf; }

/* status bar */
.status {
  height: 30px;
  display: flex;
  align-items: center;
  padding: 0 1px 0 6px;
  background: linear-gradient(#fdfdfd, #bcbcbc);
}
.count { gap: 9px; margin-right: auto; }
.sb { width: 31px; height: 30px; }
.bar { width: 2px; height: 26px; margin: 0 3px; background: #888; }

/* drag target */
.upload {
  position: absolute;
  left: 825px;
  top: 99px;
  height: 56px;
  display: flex;
  align-items: center;
  padding-right: 10px;
  gap: 9px;
  font-size: 20px;
  font-weight: 700;
  color: #0a9ffa;
  background: #f0f8ff;
  border: 1px solid #0a95f8;
  border-radius: 11px;
}
.upload-text { padding-top: 2px; }
.upload-logo {
  width: 54px;
  height: 54px;
  display: grid;
  place-items: center;
  border-radius: 10px;
  background: linear-gradient(45deg, #30b0ff, #0a90ff 60%);
}
```
